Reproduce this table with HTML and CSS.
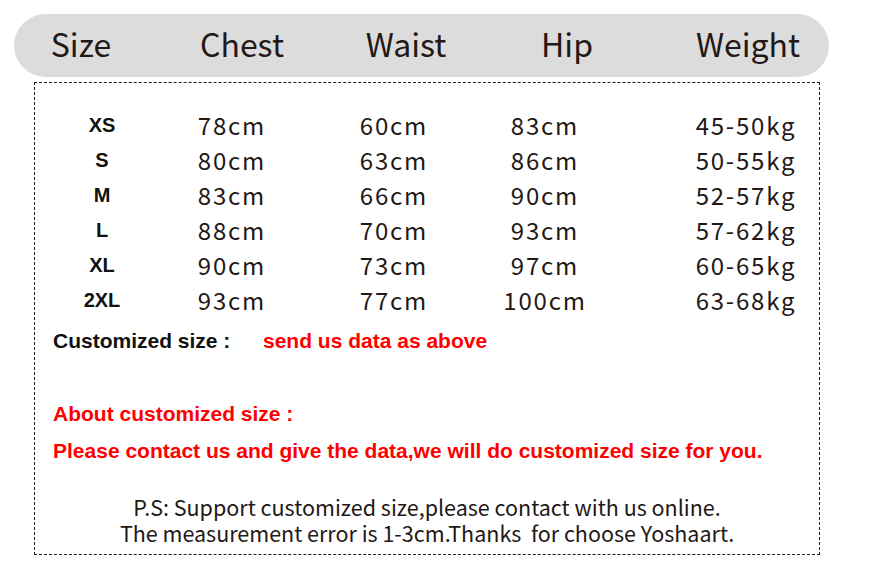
FILE: index.html
```html
<!DOCTYPE html>
<html>
<head>
<meta charset="utf-8">
<link rel="stylesheet" href="styles.css">
</head>
<body>
<div class="page">
  <div class="head">
    <div class="hc c1">Size</div>
    <div class="hc c2">Chest</div>
    <div class="hc c3">Waist</div>
    <div class="hc c4">Hip</div>
    <div class="hc c5">Weight</div>
  </div>
  <div class="box">
    <div class="rows">
      <div class="row"><div class="sz">XS</div><div class="v">78cm</div><div class="v">60cm</div><div class="v">83cm</div><div class="v">45-50kg</div></div>
      <div class="row"><div class="sz">S</div><div class="v">80cm</div><div class="v">63cm</div><div class="v">86cm</div><div class="v">50-55kg</div></div>
      <div class="row"><div class="sz">M</div><div class="v">83cm</div><div class="v">66cm</div><div class="v">90cm</div><div class="v">52-57kg</div></div>
      <div class="row"><div class="sz">L</div><div class="v">88cm</div><div class="v">70cm</div><div class="v">93cm</div><div class="v">57-62kg</div></div>
      <div class="row"><div class="sz">XL</div><div class="v">90cm</div><div class="v">73cm</div><div class="v">97cm</div><div class="v">60-65kg</div></div>
      <div class="row"><div class="sz">2XL</div><div class="v">93cm</div><div class="v">77cm</div><div class="v">100cm</div><div class="v">63-68kg</div></div>
    </div>
    <div class="custom"><span class="blk">Customized size :</span><span class="red">send us data as above</span></div>
    <div class="about red">About customized size :</div>
    <div class="please red">Please contact us and give the data,we will do customized size for you.</div>
    <div class="ps">
      <div>P.S: Support customized size,please contact with us online.</div>
      <div>The measurement error is 1-3cm.Thanks&nbsp; for choose Yoshaart.</div>
    </div>
  </div>
</div>
</body>
</html>
```
FILE: styles.css
```css
html, body {
  margin: 0;
  padding: 0;
  background: #ffffff;
}
.page {
  width: 869px;
  height: 566px;
  padding-top: 14px;
  box-sizing: border-box;
  color: #231815;
}
.head {
  margin-left: 14px;
  width: 815px;
  height: 63px;
  box-sizing: border-box;
  padding-bottom: 6px;
  border-radius: 32px;
  background: #dcdcdc;
  display: grid;
  grid-template-columns: 134px 188px 140px 182px 180px;
  align-items: center;
  font-family: "Noto Sans CJK SC", "Noto Sans", sans-serif;
  font-size: 32px;
  line-height: 1;
}
.hc {
  text-align: center;
  white-space: nowrap;
}
.box {
  margin-left: 34px;
  margin-top: 5px;
  width: 786px;
  height: 473px;
  box-sizing: border-box;
  border: 1px dashed #231815;
  display: flex;
  flex-direction: column;
}
.rows {
  padding-top: 24px;
  display: flex;
  flex-direction: column;
}
.row {
  height: 35px;
  display: grid;
  grid-template-columns: 134px 126px 198px 104px 298px;
  align-items: center;
}
.row > div {
  text-align: center;
  white-space: nowrap;
}
.sz {
  font-family: "Liberation Sans", Arial, sans-serif;
  font-weight: bold;
  font-size: 20px;
  color: #111;
  padding-top: 1px;
}
.v {
  font-family: "Noto Sans CJK SC", "Noto Sans", sans-serif;
  font-size: 24px;
  letter-spacing: 1.8px;
  line-height: 1;
}
.custom {
  margin-top: 12px;
  padding-left: 18px;
  height: 24px;
  display: flex;
  align-items: center;
  font-family: "Liberation Sans", Arial, sans-serif;
  font-weight: bold;
  font-size: 21px;
}
.blk {
  color: #111;
  width: 210px;
}
.red {
  color: #ff0000;
}
.about {
  margin-top: 49px;
  padding-left: 18px;
  height: 24px;
  line-height: 24px;
  font-family: "Liberation Sans", Arial, sans-serif;
  font-weight: bold;
  font-size: 21px;
}
.please {
  margin-top: 13px;
  padding-left: 18px;
  height: 24px;
  line-height: 24px;
  font-family: "Liberation Sans", Arial, sans-serif;
  font-weight: bold;
  font-size: 21px;
  white-space: nowrap;
}
.ps {
  margin-top: 31px;
  text-align: center;
  font-family: "Noto Sans CJK SC", "Noto Sans", sans-serif;
  font-size: 21.5px;
  line-height: 26px;
  white-space: nowrap;
}
```
